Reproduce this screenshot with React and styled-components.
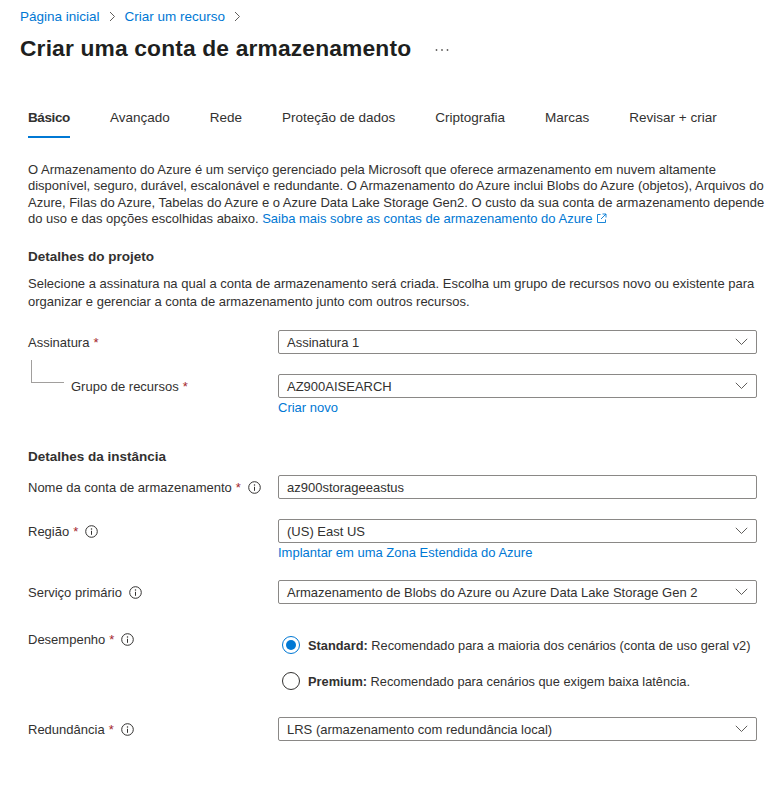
import React from "react";
import styled, { createGlobalStyle } from "styled-components";

const Global = createGlobalStyle`
  * { box-sizing: border-box; }
  html, body { margin: 0; padding: 0; background: #fff; }
  body {
    font-family: "Liberation Sans", Arial, sans-serif;
    color: #323130;
    font-size: 13px;
  }
`;

const Page = styled.div`
  width: 772px;
  min-height: 789px;
  padding: 6px 15px 40px 20px;
  background: #fff;
  overflow: hidden;
`;

const Breadcrumb = styled.nav`
  display: flex;
  align-items: center;
  gap: 9px;
  height: 20px;
  font-size: 13.5px;
  color: #0078d4;
`;

const Crumb = styled.a`
  color: #0078d4;
  text-decoration: none;
`;

const CrumbSep = styled.span`
  display: inline-flex;
  color: #605e5c;
`;

const TitleRow = styled.div`
  display: flex;
  align-items: center;
  height: 32px;
  margin-top: 6px;
  gap: 24px;
`;

const Title = styled.h1`
  margin: 0;
  font-size: 22.8px;
  font-weight: 600;
  line-height: 32px;
  color: #201f1e;
  letter-spacing: 0.15px;
`;

const More = styled.span`
  display: inline-flex;
  margin-top: 4px;
`;

const Tabs = styled.div`
  display: flex;
  gap: 40px;
  padding-left: 8px;
  margin-top: 44px;
`;

const Tab = styled.div`
  font-size: 13.5px;
  line-height: 20px;
  padding-bottom: 8px;
  color: #323130;
  font-weight: ${(p) => (p.$active ? 600 : 400)};
  letter-spacing: ${(p) => (p.$active ? "-0.4px" : "0")};
  border-bottom: 2px solid ${(p) => (p.$active ? "#0078d4" : "transparent")};
  white-space: nowrap;
`;

const Content = styled.div`
  padding-left: 8px;
`;

const Para = styled.p`
  margin: ${(p) => p.$mt || 0}px -12px 0 0;
  font-size: 13px;
  line-height: ${(p) => p.$lh || 16.3}px;
  color: #323130;
`;

const Line = styled.span`
  display: block;
  white-space: nowrap;
`;

const Link = styled.a`
  color: #0078d4;
  text-decoration: none;
  display: ${(p) => (p.$block ? "block" : "inline")};
  line-height: ${(p) => (p.$block ? "16px" : "inherit")};
  margin-top: ${(p) => (p.$block ? "2px" : "0")};
  font-size: 13px;
`;

const SectionTitle = styled.h2`
  margin: ${(p) => p.$mt}px 0 0 0;
  font-size: 13.5px;
  font-weight: 600;
  line-height: 20px;
  color: #323130;
`;

const Row = styled.div`
  display: grid;
  grid-template-columns: 250px 1fr;
  align-items: start;
  margin-top: ${(p) => p.$mt}px;
`;

const Label = styled.div`
  position: relative;
  display: flex;
  align-items: center;
  gap: 4px;
  height: ${(p) => (p.$tall ? "20px" : "24px")};
  padding-left: ${(p) => (p.$indent ? "43px" : "0")};
  font-size: 13px;
  color: #323130;
  white-space: nowrap;

  ${(p) =>
    p.$indent &&
    `
    &::before {
      content: "";
      position: absolute;
      left: 3px;
      top: -14px;
      width: 32px;
      height: 22px;
      border-left: 1px solid #a19f9d;
      border-bottom: 1px solid #a19f9d;
    }
  `}
`;

const Req = styled.span`
  color: #a4262c;
`;

const Control = styled.div`
  display: flex;
  flex-direction: column;
`;

const Box = styled.div`
  height: 24px;
  border: 1px solid #8a8886;
  border-radius: 2px;
  display: flex;
  align-items: center;
  justify-content: space-between;
  padding: 0 8px 0 8px;
  font-size: 13px;
  color: #323130;
  background: #fff;
`;

const Radios = styled.div`
  display: flex;
  flex-direction: column;
  gap: 16px;
  padding: 6px 0 0 4px;
`;

const RadioItem = styled.label`
  display: flex;
  align-items: center;
  gap: 8px;
  height: 20px;
  font-size: 12.8px;
  color: #323130;
  white-space: nowrap;
`;

const RadioCircle = styled.span`
  width: 18px;
  height: 18px;
  border-radius: 50%;
  border: 1px solid ${(p) => (p.$checked ? "#0078d4" : "#323130")};
  display: inline-flex;
  align-items: center;
  justify-content: center;
  flex-shrink: 0;

  &::after {
    content: "";
    width: 10px;
    height: 10px;
    border-radius: 50%;
    background: ${(p) => (p.$checked ? "#0078d4" : "transparent")};
  }
`;

const Strong = styled.b`
  font-weight: 600;
`;

const Chevron = () => (
  <svg width="13" height="8" viewBox="0 0 13 8" fill="none">
    <path d="M0.8 0.8 L6.5 6.5 L12.2 0.8" stroke="#605e5c" strokeWidth="1" />
  </svg>
);

const Info = () => (
  <svg width="13" height="13" viewBox="0 0 13 13" fill="none" style={{ marginLeft: 3 }}>
    <circle cx="6.5" cy="6.5" r="5.8" stroke="#323130" strokeWidth="1" />
    <circle cx="6.5" cy="4" r="0.75" fill="#323130" />
    <path d="M6.5 5.8 V9.8" stroke="#323130" strokeWidth="1" />
  </svg>
);

const External = () => (
  <svg width="11" height="11" viewBox="0 0 11 11" fill="none" style={{ marginLeft: 4, verticalAlign: "-1px" }}>
    <path d="M4.5 1.5 H1.5 V9.5 H9.5 V6.5" stroke="#0078d4" strokeWidth="0.9" />
    <path d="M6.5 1 H10 V4.5 M10 1 L5 6" stroke="#0078d4" strokeWidth="0.9" />
  </svg>
);

const Sep = () => (
  <CrumbSep>
    <svg width="7" height="11" viewBox="0 0 7 11" fill="none">
      <path d="M1 1 L5.5 5.5 L1 10" stroke="#605e5c" strokeWidth="1" />
    </svg>
  </CrumbSep>
);

const Dots = () => (
  <More>
    <svg width="14" height="4" viewBox="0 0 14 4">
      <circle cx="1.5" cy="2" r="0.9" fill="#605e5c" />
      <circle cx="7" cy="2" r="0.9" fill="#605e5c" />
      <circle cx="12.5" cy="2" r="0.9" fill="#605e5c" />
    </svg>
  </More>
);

const Select = ({ value }) => (
  <Box>
    <span>{value}</span>
    <Chevron />
  </Box>
);

const tabs = ["Básico", "Avançado", "Rede", "Proteção de dados", "Criptografia", "Marcas", "Revisar + criar"];

export default function App() {
  return (
    <Page>
      <Global />
      <Breadcrumb>
        <Crumb>Página inicial</Crumb>
        <Sep />
        <Crumb>Criar um recurso</Crumb>
        <Sep />
      </Breadcrumb>
      <TitleRow>
        <Title>Criar uma conta de armazenamento</Title>
        <Dots />
      </TitleRow>

      <Tabs>
        {tabs.map((t, i) => (
          <Tab key={t} $active={i === 0}>
            {t}
          </Tab>
        ))}
      </Tabs>

      <Content>
        <Para $mt={24}>
          <Line>O Armazenamento do Azure é um serviço gerenciado pela Microsoft que oferece armazenamento em nuvem altamente</Line>
          <Line>disponível, seguro, durável, escalonável e redundante. O Armazenamento do Azure inclui Blobs do Azure (objetos), Arquivos do</Line>
          <Line>Azure, Filas do Azure, Tabelas do Azure e o Azure Data Lake Storage Gen2. O custo da sua conta de armazenamento depende</Line>
          <Line>
            do uso e das opções escolhidas abaixo.{" "}
            <Link>
              Saiba mais sobre as contas de armazenamento do Azure
              <External />
            </Link>
          </Line>
        </Para>

        <SectionTitle $mt={20}>Detalhes do projeto</SectionTitle>
        <Para $mt={8} $lh={18}>
          <Line>Selecione a assinatura na qual a conta de armazenamento será criada. Escolha um grupo de recursos novo ou existente para</Line>
          <Line>organizar e gerenciar a conta de armazenamento junto com outros recursos.</Line>
        </Para>

        <Row $mt={19}>
          <Label>
            Assinatura<Req>*</Req>
          </Label>
          <Control>
            <Select value="Assinatura 1" />
          </Control>
        </Row>

        <Row $mt={20}>
          <Label $indent>
            Grupo de recursos<Req>*</Req>
          </Label>
          <Control>
            <Select value="AZ900AISEARCH" />
            <Link $block>Criar novo</Link>
          </Control>
        </Row>

        <SectionTitle $mt={31}>Detalhes da instância</SectionTitle>

        <Row $mt={8}>
          <Label>
            Nome da conta de armazenamento<Req>*</Req>
            <Info />
          </Label>
          <Control>
            <Box>az900storageeastus</Box>
          </Control>
        </Row>

        <Row $mt={20}>
          <Label>
            Região<Req>*</Req>
            <Info />
          </Label>
          <Control>
            <Select value="(US) East US" />
            <Link $block>Implantar em uma Zona Estendida do Azure</Link>
          </Control>
        </Row>

        <Row $mt={19}>
          <Label>
            Serviço primário
            <Info />
          </Label>
          <Control>
            <Select value="Armazenamento de Blobs do Azure ou Azure Data Lake Storage Gen 2" />
          </Control>
        </Row>

        <Row $mt={25}>
          <Label $tall>
            Desempenho<Req>*</Req>
            <Info />
          </Label>
          <Radios>
            <RadioItem>
              <RadioCircle $checked />
              <span>
                <Strong>Standard:</Strong> Recomendado para a maioria dos cenários (conta de uso geral v2)
              </span>
            </RadioItem>
            <RadioItem>
              <RadioCircle />
              <span>
                <Strong>Premium:</Strong> Recomendado para cenários que exigem baixa latência.
              </span>
            </RadioItem>
          </Radios>
        </Row>

        <Row $mt={26}>
          <Label>
            Redundância<Req>*</Req>
            <Info />
          </Label>
          <Control>
            <Select value="LRS (armazenamento com redundância local)" />
          </Control>
        </Row>
      </Content>
    </Page>
  );
}
